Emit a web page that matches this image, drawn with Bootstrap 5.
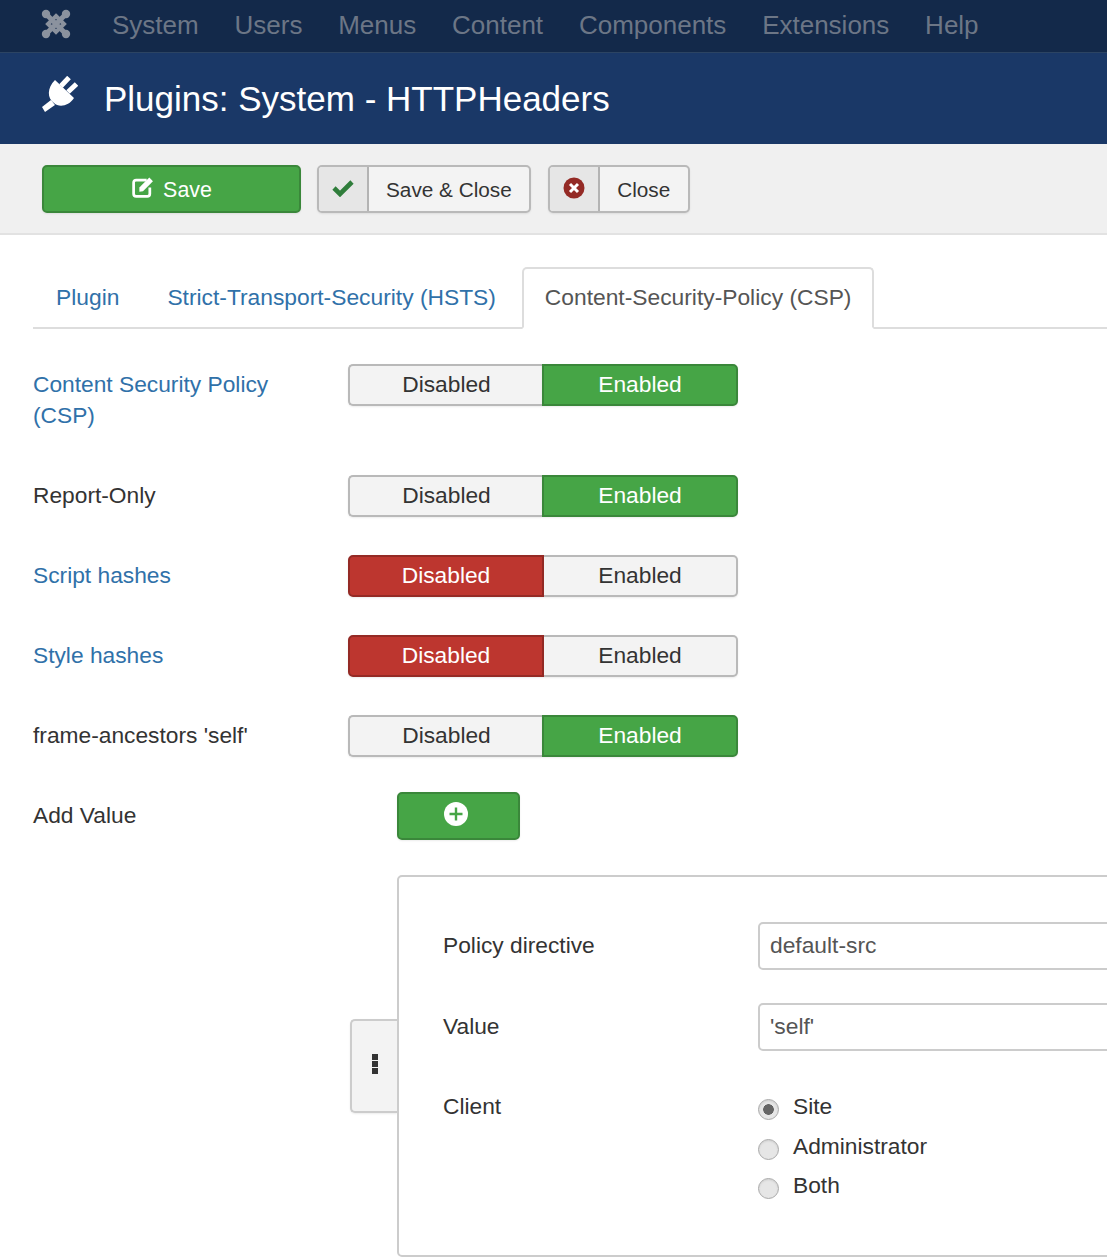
<!DOCTYPE html>
<html lang="en">
<head>
    <meta charset="UTF-8" />
    <meta name="viewport" content="width=device-width, initial-scale=1.0" />
    <title>Plugins: System - HTTPHeaders</title>
    <link href="https://cdn.jsdelivr.net/npm/bootstrap@5.3.0/dist/css/bootstrap.min.css" rel="stylesheet" />
    <style>
        html, body {
            height: 100%;
            overflow: hidden;
        }

        body {
            font-family: "Liberation Sans", Arial, sans-serif;
            font-size: 22.75px;
            line-height: 31px;
            color: #333;
            background: #fff;
        }

        .top-nav {
            height: 53px;
            padding: 0 0 0 41px;
            background: #13294a;
            border-bottom: 1px solid #2c4463;
            flex-wrap: nowrap;
            justify-content: flex-start;
        }

        .top-nav .nav-link {
            font-size: 26px;
            line-height: 48px;
            padding: 0 0 2px;
            color: #6c7686;
        }

        .top-nav .navbar-nav {
            flex-direction: row;
            gap: 35.8px;
        }

        .nav-logo {
            width: 30px;
            height: 30px;
            margin: 0 41px 4px 0;
            flex-shrink: 0;
        }

        .title-bar {
            height: 91px;
            padding-left: 41px;
            background: #1a3867;
            color: #fff;
        }

        .title-bar h1 {
            font-size: 35px;
            line-height: 91px;
            font-weight: 400;
            margin: 0 0 0 26px;
        }

        .tool-bar {
            height: 91px;
            padding: 21px 0 0 42px;
            background: #f0f0f0;
            border-bottom: 2px solid #e2e2e2;
        }

        .btn-save, .btn-add {
            display: flex;
            align-items: center;
            justify-content: center;
            height: 48px;
            padding: 0;
            color: #fff;
            background: #46a546;
            border: 2px solid #3a873a;
            border-radius: 5px;
            box-shadow: 0 1px 2px rgba(0, 0, 0, .08);
        }

        .btn-save {
            width: 259px;
            gap: 9px;
            margin-right: 16px;
            font-size: 21.4px;
            line-height: 46px;
        }

        .btn-save span {
            padding-top: 1px;
        }

        .btn-add {
            width: 123px;
            margin: -3px 0 0 49px;
            padding: 0 6px 4px 0;
        }

        .btn-tool {
            display: flex;
            height: 48px;
            padding: 0;
            margin-right: 17px;
            font-size: 20.75px;
            line-height: 46px;
            color: #333;
            background: #f3f3f3;
            border: 2px solid #b9b9b9;
            border-radius: 5px;
            box-shadow: 0 1px 2px rgba(0, 0, 0, .08);
        }

        .tool-icon {
            display: flex;
            align-items: center;
            justify-content: center;
            width: 50px;
            padding-bottom: 3px;
            background: #e6e6e6;
            border-right: 2px solid #b3b3b3;
            border-radius: 3px 0 0 3px;
        }

        .tool-text {
            padding: 0 17.5px 0 17px;
        }

        .tab-row {
            margin: 32px 0 0 33px;
            border-bottom: 2px solid #ddd;
            height: 62px;
            flex-wrap: nowrap;
        }

        .tab-row .nav-link {
            height: 62px;
            padding: 13px 21px 0 21px;
            margin: 0 2px 0 0;
            color: #3071a9;
            font-size: 22.8px;
            line-height: 31px;
            border: 2px solid transparent;
            border-bottom: 0;
        }

        .tab-row .nav-link.active {
            color: #555;
            background: #fff;
            border: 2px solid #ddd;
            border-bottom-color: #fff;
            border-radius: 5px 5px 0 0;
            margin: 0 0 0 1px;
        }

        .form-area {
            padding: 35px 0 0 33px;
        }

        .field-row {
            display: flex;
            margin-bottom: 38px;
        }

        .field-label {
            width: 315px;
            flex-shrink: 0;
            padding: 5px 40px 6px 0;
        }

        .field-label.has-tip {
            color: #3071a9;
        }

        .toggle-set {
            width: 390px;
            height: 42px;
            flex-shrink: 0;
        }

        .form-area .toggle-set.btn-group > .btn {
            flex: 0 0 194px;
            margin-left: 0;
            padding: 0 0 2px;
            font-size: 22.75px;
            line-height: 36px;
            color: #333;
            background: #f3f3f3;
            border: 2px solid #b9b9b9;
            box-shadow: 0 1px 2px rgba(0, 0, 0, .08);
        }

        .form-area .toggle-set.btn-group > .btn:first-child {
            padding-left: 1px;
            border-right: 0;
            border-radius: 5px 0 0 5px;
        }

        .form-area .toggle-set.btn-group > .btn:last-child {
            border-left: 0;
            border-radius: 0 5px 5px 0;
        }

        .form-area .toggle-set.btn-group > .btn.is-on {
            flex-basis: 196px;
            color: #fff;
            background: #46a546;
            border: 2px solid #3a873a;
            border-radius: 0 5px 5px 0;
        }

        .form-area .toggle-set.btn-group > .btn.is-off {
            flex-basis: 196px;
            padding-left: 0;
            color: #fff;
            background: #bd362f;
            border: 2px solid #942a25;
            border-radius: 5px 0 0 5px;
        }

        .sub-form {
            display: flex;
            align-items: center;
            margin: -3px 0 0 317px;
        }

        .drag-handle {
            display: flex;
            align-items: center;
            justify-content: center;
            flex-direction: column;
            gap: 1px;
            width: 47px;
            height: 94px;
            flex-shrink: 0;
            padding-bottom: 4px;
            background: #f3f3f3;
            border: 2px solid #ccc;
            border-right: 0;
            border-radius: 5px 0 0 5px;
            box-shadow: 0 1px 2px rgba(0, 0, 0, .08);
        }

        .drag-handle span {
            width: 6px;
            height: 6px;
            background: #333;
        }

        .sub-panel {
            width: 900px;
            height: 382px;
            flex-shrink: 0;
            padding: 45px 0 0 44px;
            border: 2px solid #ccc;
            border-radius: 5px;
        }

        .sub-row {
            display: flex;
            margin-bottom: 33px;
        }

        .sub-label {
            width: 315px;
            flex-shrink: 0;
            padding-top: 8px;
        }

        .sub-input {
            width: 500px;
            height: 48px;
            padding: 0 10px 1px;
            font-size: 22.8px;
            color: #555;
            border: 2px solid #ccc;
            border-radius: 5px;
        }

        .client-label {
            padding-top: 7px;
        }

        .client-list {
            margin-top: 3px;
        }

        .client-list .form-check {
            display: flex;
            align-items: center;
            height: 39.5px;
            min-height: 0;
            margin: 0;
            padding: 0;
        }

        .client-list .form-check-input {
            width: 21px;
            height: 21px;
            margin: 6px 14px 0 0;
            float: none;
            flex-shrink: 0;
            background-color: #e6e6e6;
            border: 1px solid #aaa;
            box-shadow: inset 0 1px 2px rgba(0, 0, 0, .1);
        }

        .client-list .form-check-input:checked {
            background-color: #e6e6e6;
            background-image: radial-gradient(circle, #666 0, #666 5px, transparent 5.6px);
            border-color: #aaa;
        }

        .client-list .form-check-label {
            line-height: 31px;
        }
    </style>
</head>
<body>
    <nav class="navbar top-nav">
        <svg class="nav-logo" viewBox="0 0 30 30" fill="none" stroke="#8b929e">
            <path d="M5 5 L25 25 M25 5 L5 25" stroke-width="5" />
            <path d="M15 7 L23 15 L15 23 L7 15 Z" stroke-width="4" />
            <g fill="#8b929e" stroke="none">
                <circle cx="5" cy="5" r="4.2" />
                <circle cx="25" cy="5" r="4.2" />
                <circle cx="5" cy="25" r="4.2" />
                <circle cx="25" cy="25" r="4.2" />
            </g>
        </svg>
        <ul class="navbar-nav">
            <li class="nav-item"><a class="nav-link" href="#">System</a></li>
            <li class="nav-item"><a class="nav-link" href="#">Users</a></li>
            <li class="nav-item"><a class="nav-link" href="#">Menus</a></li>
            <li class="nav-item"><a class="nav-link" href="#">Content</a></li>
            <li class="nav-item"><a class="nav-link" href="#">Components</a></li>
            <li class="nav-item"><a class="nav-link" href="#">Extensions</a></li>
            <li class="nav-item"><a class="nav-link" href="#">Help</a></li>
        </ul>
    </nav>

    <header class="title-bar d-flex align-items-center">
        <svg width="37" height="37" viewBox="0 0 37 37" fill="#fff" class="mb-2">
            <path d="M1 31 L10 24 L14 29 L4 36 Z" />
            <path d="M14 4 L33 22 C28 30 18 32 13 27 C6 22 6 12 14 4 Z" />
            <path d="M20 10 L28 1.5 M27 16 L35.5 8" stroke="#fff" stroke-width="5" />
        </svg>
        <h1>Plugins: System - HTTPHeaders</h1>
    </header>

    <div class="tool-bar d-flex align-items-start">
        <button type="button" class="btn btn-save">
            <svg width="23" height="23" viewBox="0 0 22 22" fill="none" class="mb-1">
                <path d="M15 4 H5 Q2.5 4 2.5 6.5 V17 Q2.5 19.5 5 19.5 H15.5 Q18 19.5 18 17 V11" stroke="#fff" stroke-width="2.6" />
                <path d="M8 11 L17.5 1.5 L21 5 L11.5 14.5 L8 15 Z" fill="#fff" />
            </svg>
            <span>Save</span>
        </button>
        <button type="button" class="btn btn-tool">
            <span class="tool-icon">
                <svg width="22" height="18" viewBox="0 0 22 18" fill="none">
                    <path d="M2 9 L8 15 L20 3" stroke="#2f7d3b" stroke-width="4.6" />
                </svg>
            </span>
            <span class="tool-text">Save &amp; Close</span>
        </button>
        <button type="button" class="btn btn-tool">
            <span class="tool-icon">
                <svg width="22" height="22" viewBox="0 0 22 22">
                    <circle cx="11" cy="11" r="10.5" fill="#942a25" />
                    <path d="M7 7 L15 15 M15 7 L7 15" stroke="#fff" stroke-width="3" />
                </svg>
            </span>
            <span class="tool-text">Close</span>
        </button>
    </div>

    <ul class="nav nav-tabs tab-row">
        <li class="nav-item"><a class="nav-link" href="#">Plugin</a></li>
        <li class="nav-item"><a class="nav-link" href="#">Strict-Transport-Security (HSTS)</a></li>
        <li class="nav-item"><a class="nav-link active" href="#">Content-Security-Policy (CSP)</a></li>
    </ul>

    <div class="form-area">
        <div class="field-row">
            <div class="field-label has-tip">Content Security Policy (CSP)</div>
            <div class="btn-group toggle-set">
                <button type="button" class="btn">Disabled</button>
                <button type="button" class="btn is-on">Enabled</button>
            </div>
        </div>
        <div class="field-row">
            <div class="field-label">Report-Only</div>
            <div class="btn-group toggle-set">
                <button type="button" class="btn">Disabled</button>
                <button type="button" class="btn is-on">Enabled</button>
            </div>
        </div>
        <div class="field-row">
            <div class="field-label has-tip">Script hashes</div>
            <div class="btn-group toggle-set">
                <button type="button" class="btn is-off">Disabled</button>
                <button type="button" class="btn">Enabled</button>
            </div>
        </div>
        <div class="field-row">
            <div class="field-label has-tip">Style hashes</div>
            <div class="btn-group toggle-set">
                <button type="button" class="btn is-off">Disabled</button>
                <button type="button" class="btn">Enabled</button>
            </div>
        </div>
        <div class="field-row">
            <div class="field-label">frame-ancestors 'self'</div>
            <div class="btn-group toggle-set">
                <button type="button" class="btn">Disabled</button>
                <button type="button" class="btn is-on">Enabled</button>
            </div>
        </div>
        <div class="field-row">
            <div class="field-label">Add Value</div>
            <button type="button" class="btn btn-add" aria-label="Add">
                <svg width="24" height="24" viewBox="0 0 24 24">
                    <circle cx="12" cy="12" r="12" fill="#fff" />
                    <path d="M12 5.5 V18.5 M5.5 12 H18.5" stroke="#46a546" stroke-width="2.4" />
                </svg>
            </button>
        </div>

        <div class="sub-form">
            <div class="drag-handle"><span></span><span></span><span></span></div>
            <div class="sub-panel">
                <div class="sub-row">
                    <div class="sub-label">Policy directive</div>
                    <input type="text" class="form-control sub-input" value="default-src" />
                </div>
                <div class="sub-row">
                    <div class="sub-label">Value</div>
                    <input type="text" class="form-control sub-input" value="'self'" />
                </div>
                <div class="sub-row">
                    <div class="sub-label client-label">Client</div>
                    <div class="client-list">
                        <div class="form-check">
                            <input class="form-check-input" type="radio" name="client" id="clientSite" checked />
                            <label class="form-check-label" for="clientSite">Site</label>
                        </div>
                        <div class="form-check">
                            <input class="form-check-input" type="radio" name="client" id="clientAdmin" />
                            <label class="form-check-label" for="clientAdmin">Administrator</label>
                        </div>
                        <div class="form-check">
                            <input class="form-check-input" type="radio" name="client" id="clientBoth" />
                            <label class="form-check-label" for="clientBoth">Both</label>
                        </div>
                    </div>
                </div>
            </div>
        </div>
    </div>

    <script src="https://cdn.jsdelivr.net/npm/bootstrap@5.3.0/dist/js/bootstrap.bundle.min.js"></script>
</body>
</html>
